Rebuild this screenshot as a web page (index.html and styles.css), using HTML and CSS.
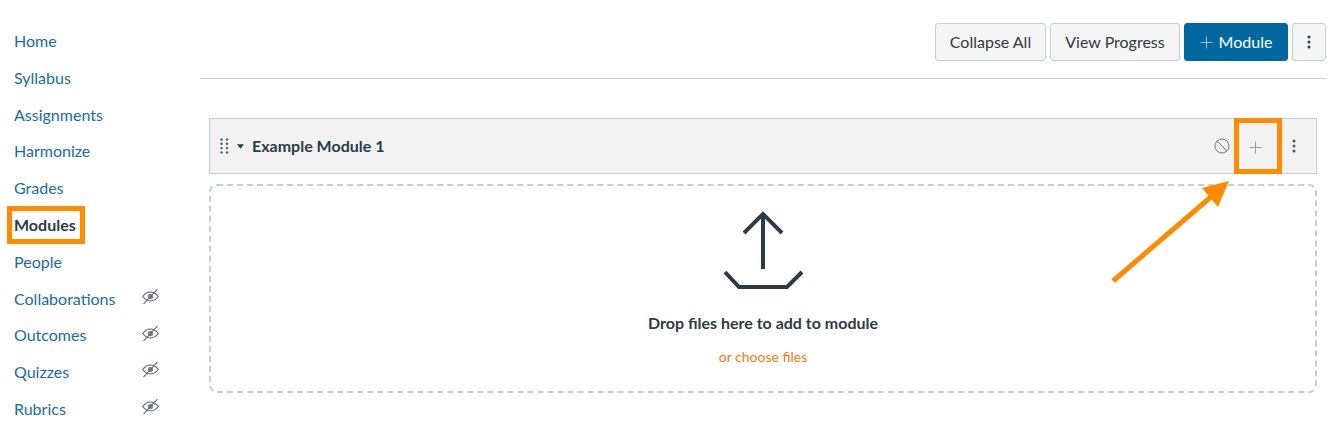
FILE: index.html
```html
<!DOCTYPE html>
<html lang="en">
<head>
  <meta charset="UTF-8" />
  <title>Modules</title>
  <link rel="stylesheet" href="styles.css">
</head>
<body>
  <nav class="sidebar">
    <a class="nav-item" href="#"><span>Home</span></a>
    <a class="nav-item" href="#"><span>Syllabus</span></a>
    <a class="nav-item" href="#"><span>Assignments</span></a>
    <a class="nav-item" href="#"><span>Harmonize</span></a>
    <a class="nav-item" href="#"><span>Grades</span></a>
    <a class="nav-item active" href="#"><span>Modules</span></a>
    <a class="nav-item" href="#"><span>People</span></a>
    <a class="nav-item" href="#"><span>Collaborations</span>
      <svg class="eye" viewBox="0 0 16 16"><use href="#eye-off"/></svg></a>
    <a class="nav-item" href="#"><span>Outcomes</span>
      <svg class="eye" viewBox="0 0 16 16"><use href="#eye-off"/></svg></a>
    <a class="nav-item" href="#"><span>Quizzes</span>
      <svg class="eye" viewBox="0 0 16 16"><use href="#eye-off"/></svg></a>
    <a class="nav-item" href="#"><span>Rubrics</span>
      <svg class="eye" viewBox="0 0 16 16"><use href="#eye-off"/></svg></a>
  </nav>

  <main class="content">
    <div class="toolbar">
      <button class="btn btn-collapse">Collapse All</button>
      <button class="btn btn-progress">View Progress</button>
      <button class="btn primary">
        <svg class="btn-plus" viewBox="0 0 14 14"><path d="M7 0.5v13M0.5 7h13"/></svg>
        Module
      </button>
      <button class="btn kebab">
        <svg viewBox="0 0 4 14"><circle cx="2" cy="2" r="1.5"/><circle cx="2" cy="7" r="1.5"/><circle cx="2" cy="12" r="1.5"/></svg>
      </button>
    </div>

    <section class="module">
      <header class="module-head">
        <svg class="drag" viewBox="0 0 9 16">
          <circle cx="1.5" cy="1.5" r="1.2"/><circle cx="7" cy="1.5" r="1.2"/>
          <circle cx="1.5" cy="5.8" r="1.2"/><circle cx="7" cy="5.8" r="1.2"/>
          <circle cx="1.5" cy="10.1" r="1.2"/><circle cx="7" cy="10.1" r="1.2"/>
          <circle cx="1.5" cy="14.4" r="1.2"/><circle cx="7" cy="14.4" r="1.2"/>
        </svg>
        <svg class="caret" viewBox="0 0 8 5"><path d="M0 0h8L4 5z"/></svg>
        <h2 class="module-title">Example Module 1</h2>
        <svg class="no-pub" viewBox="0 0 16 16"><circle cx="8" cy="8" r="7"/><path d="M3 3l10 10"/></svg>
        <div class="add-item">
          <svg viewBox="0 0 14 14"><path d="M7 0.5v13M0.5 7h13"/></svg>
        </div>
        <svg class="head-kebab" viewBox="0 0 4 14"><circle cx="2" cy="2" r="1.5"/><circle cx="2" cy="7" r="1.5"/><circle cx="2" cy="12" r="1.5"/></svg>
      </header>

      <div class="dropzone">
        <svg class="upload" viewBox="0 0 84 84">
          <path d="M42 5v55M23 24L42 5l19 19M4 63l14 15h48l15-15"/>
        </svg>
        <p class="drop-title">Drop files here to add to module</p>
        <a class="drop-link" href="#">or choose files</a>
      </div>
    </section>
  </main>

  <!-- callout arrow drawn on top of the page -->
  <svg class="callout" viewBox="0 0 1341 432">
    <path class="callout-line" d="M1113 281L1212 196"/>
    <path class="callout-head" d="M1229 181L1202 188L1218 207z"/>
  </svg>

  <svg class="defs" width="0" height="0">
    <symbol id="eye-off" viewBox="0 0 16 16">
      <path class="eye-line" d="M0.6 8C3 5 5.4 3.8 8 3.8S13 5 15.4 8C13 11 10.6 12.2 8 12.2S3 11 0.6 8z"/>
      <circle class="eye-dot" cx="8" cy="8" r="2.5"/>
      <path class="eye-line" d="M14.5 1L1.5 15"/>
    </symbol>
  </svg>
</body>
</html>
```

FILE: styles.css
```css
* {
  box-sizing: border-box;
}
body {
  font-family: 'Lato', sans-serif;
  margin: 0;
  background: white;
  color: #2d3b45;
  display: flex;
  height: 432px;
  overflow: hidden;
  position: relative;
}

/* left course nav */
.sidebar {
  width: 200px;
  flex-shrink: 0;
  padding-top: 22.2px;
  display: flex;
  flex-direction: column;
}
.nav-item {
  height: 36.8px;
  flex-shrink: 0;
  display: flex;
  align-items: center;
  padding-left: 14px;
  font-size: 16px;
  color: #1a6aa8;
  text-decoration: none;
  position: relative;
}
.nav-item.active {
  color: #2d3b45;
  font-weight: 700;
}
.nav-item.active span {
  outline: 5px solid #ff8c00;
  margin-left: -2px;
  padding: 0 4px 0 2px;
  line-height: 28px;
}
.eye {
  width: 17px;
  height: 17px;
  position: absolute;
  left: 142px;
  top: 8px;
}
.eye-line {
  fill: none;
  stroke: #5b666e;
  stroke-width: 1;
}
.eye-dot {
  fill: #7d8890;
}

/* main column */
.content {
  flex: 1;
  padding: 23px 15px 0 0;
}
.toolbar {
  display: flex;
  justify-content: flex-end;
  gap: 4px;
  padding-bottom: 17px;
  border-bottom: 1px solid #c7cdd1;
}
.btn {
  height: 38px;
  padding: 0 0 2px;
  font-family: inherit;
  font-size: 16px;
  color: #2d3b45;
  background: #f5f5f5;
  border: 1px solid #c7cdd1;
  border-radius: 3px;
  display: flex;
  align-items: center;
  justify-content: center;
}
.btn-collapse {
  width: 111px;
}
.btn-progress {
  width: 130px;
}
.btn.primary {
  width: 104px;
  background: #00689e;
  border-color: #00689e;
  color: white;
  gap: 6px;
}
.btn-plus {
  width: 13px;
  height: 13px;
  margin-top: 2px;
  fill: none;
  stroke: #a9cbe0;
  stroke-width: 1;
}
.btn.kebab {
  width: 34px;
  padding: 0;
}
.btn.kebab svg {
  width: 4px;
  height: 14px;
  fill: #2d3b45;
}

/* module card */
.module {
  margin: 39px 9px 0;
}
.module-head {
  height: 56px;
  background: #f2f2f2;
  border: 1px solid #c7cdd1;
  display: flex;
  align-items: center;
  padding-left: 10px;
}
.drag {
  width: 9px;
  height: 16px;
  fill: #4c5860;
}
.caret {
  width: 7px;
  height: 5px;
  margin-left: 8px;
  fill: #2d3b45;
}
.module-title {
  margin: 0 0 2px 8px;
  font-size: 16px;
  font-weight: 700;
  flex: 1;
}
.no-pub {
  width: 16px;
  height: 16px;
  fill: none;
  stroke: #6f7a82;
  stroke-width: 1;
  margin-right: 4px;
}
.add-item {
  width: 48px;
  height: 56px;
  margin: -1px 0;
  border: 5px solid #ff8c00;
  display: flex;
  align-items: center;
  justify-content: center;
  padding: 2px 5px 0 0;
}
.add-item svg {
  width: 13px;
  height: 13px;
  fill: none;
  stroke: #8b959c;
  stroke-width: 1;
}
.head-kebab {
  width: 4px;
  height: 14px;
  fill: #4c5860;
  margin-left: 10px;
  margin-right: 20px;
}
.dropzone {
  margin-top: 10px;
  height: 209px;
  border: 2px dashed #c7cdd1;
  border-radius: 8px;
  display: flex;
  flex-direction: column;
  align-items: center;
  padding-top: 23px;
}
.upload {
  width: 84px;
  height: 84px;
  flex-shrink: 0;
  fill: none;
  stroke: #2d3b45;
  stroke-width: 4;
}
.drop-title {
  margin: 20px 0 0;
  font-size: 16px;
  line-height: 20px;
  font-weight: 700;
}
.drop-link {
  margin-top: 15px;
  font-size: 14px;
  line-height: 18px;
  color: #fc7a10;
  text-decoration: none;
}

/* orange callout */
.callout {
  position: absolute;
  left: 0;
  top: 0;
  width: 1341px;
  height: 432px;
  pointer-events: none;
}
.callout-line {
  stroke: #ff8c00;
  stroke-width: 5;
  fill: none;
}
.callout-head {
  fill: #ff8c00;
}
.defs {
  position: absolute;
}
```
